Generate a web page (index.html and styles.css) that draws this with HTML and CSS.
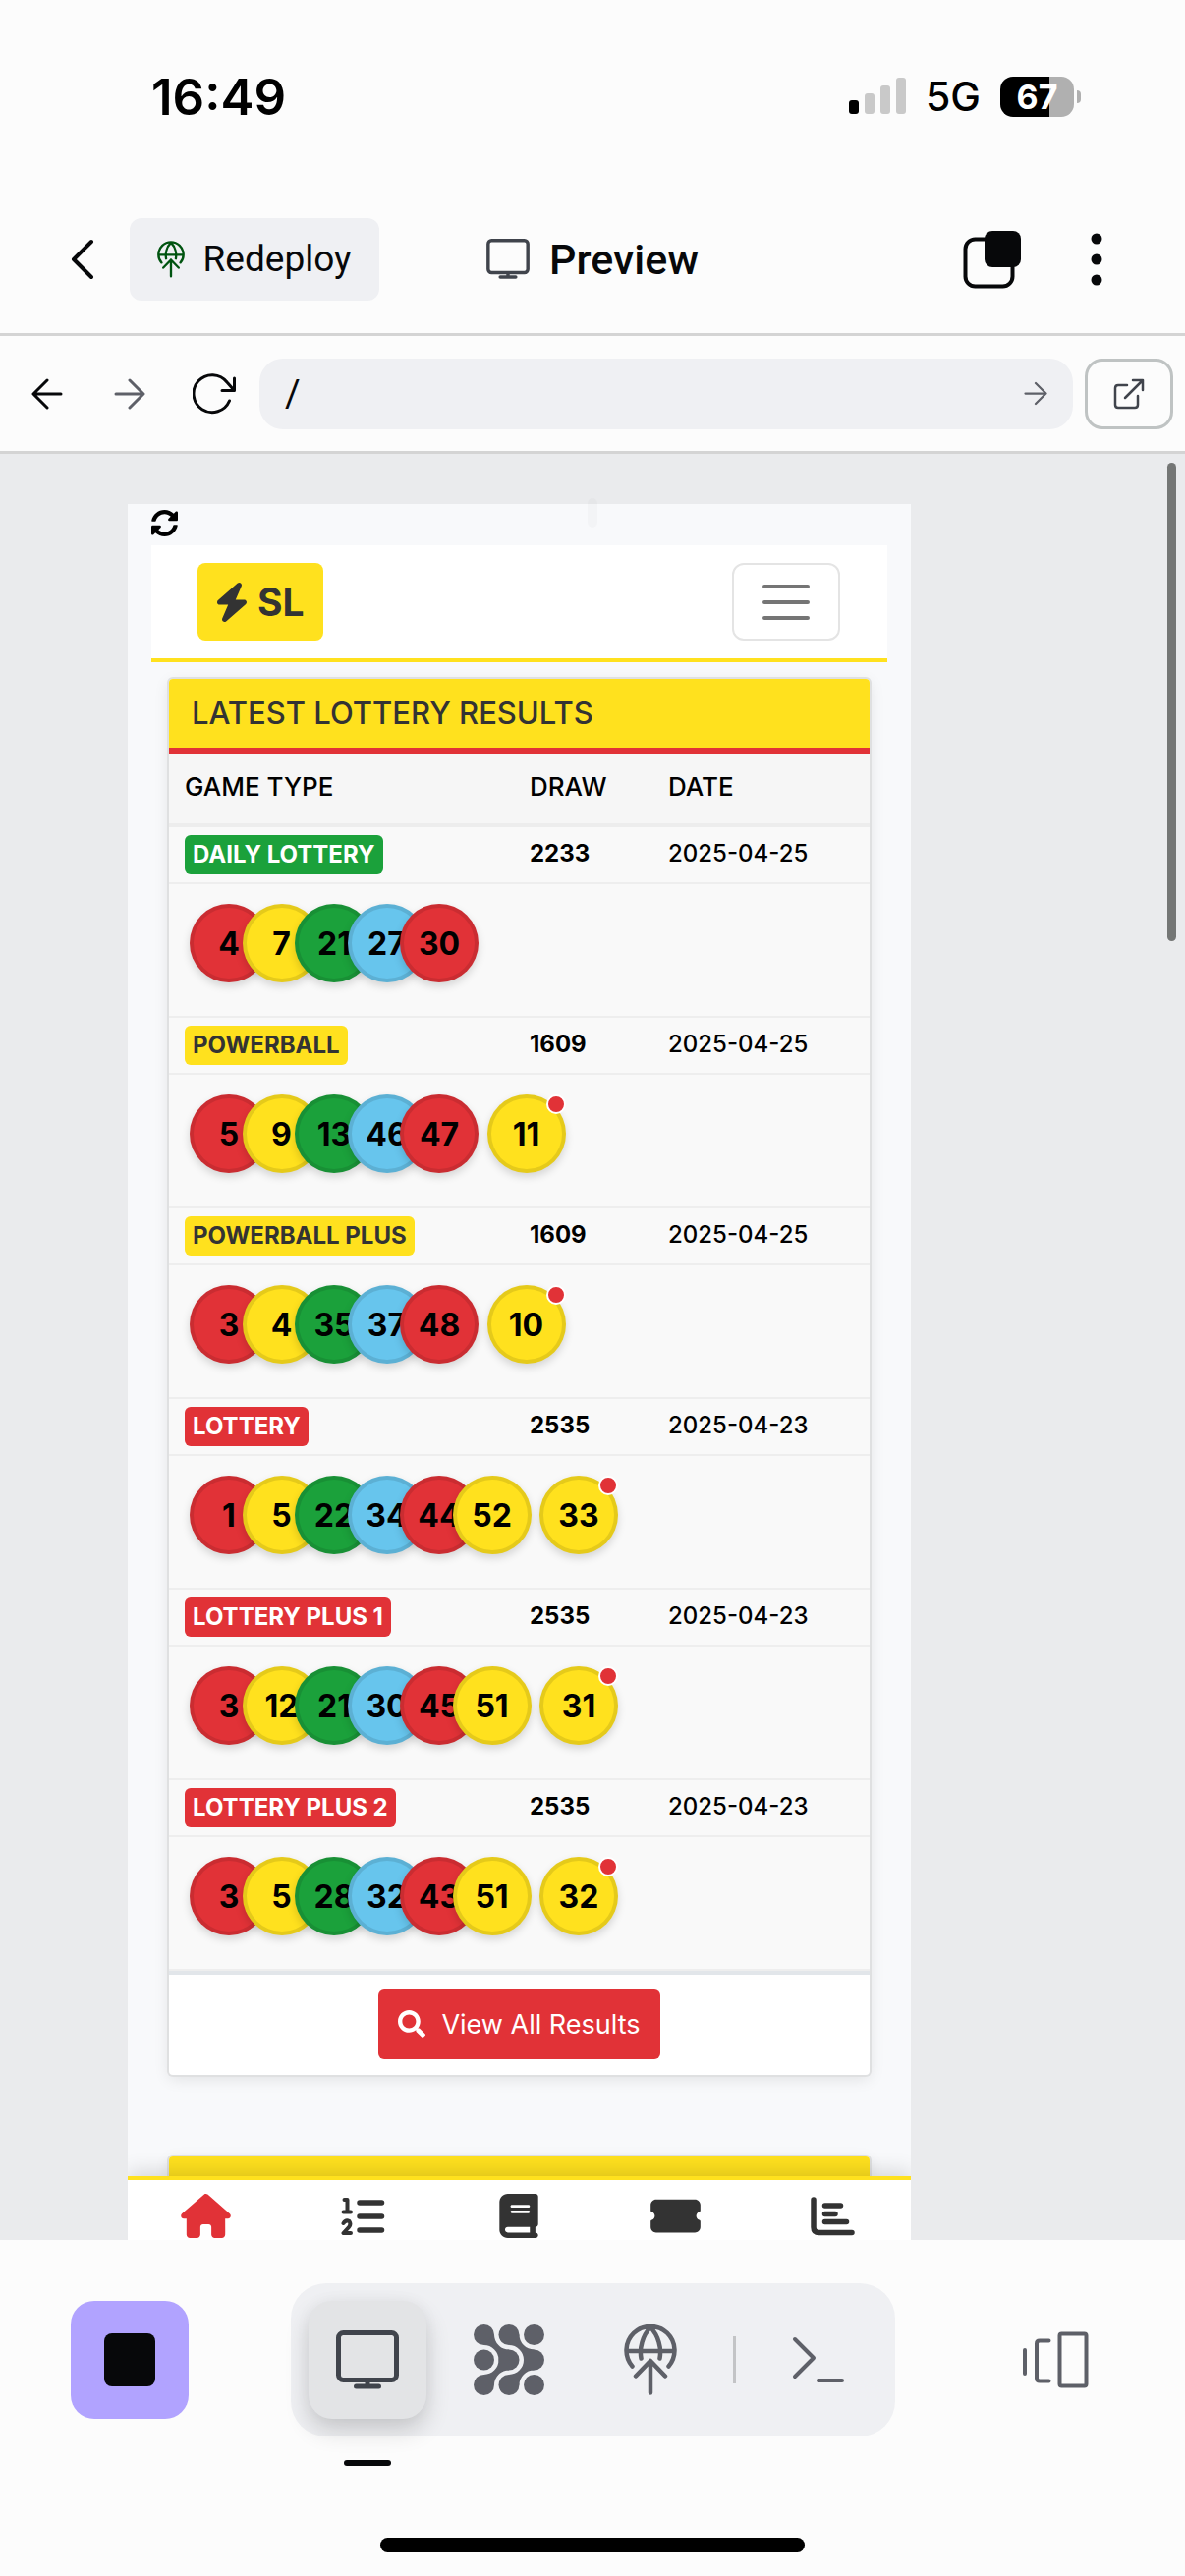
FILE: index.html
```html
<!DOCTYPE html>
<html lang="en">
<head>
<meta charset="utf-8">
<meta name="viewport" content="width=device-width, initial-scale=1">
<title>Preview</title>
<link rel="stylesheet" href="styles.css">
</head>
<body>
<svg class="defs" aria-hidden="true">
  <symbol id="i-monitor" viewBox="0 0 64 60"><g fill="none" stroke="currentColor" stroke-width="5" stroke-linecap="round" stroke-linejoin="round"><rect x="2.500" y="2.500" width="59" height="48" rx="5"/><path d="M32 51v6M20.500 57h23"/></g></symbol>
  <symbol id="i-deploy" viewBox="0 0 54 72"><g fill="none" stroke="currentColor" stroke-width="4.500" stroke-linecap="round" stroke-linejoin="round"><path d="M8.500 42.500A24.500 24.500 0 1 1 45.500 42.500M3 27H51M17.500 34.500C15.500 24 19 11 27 3C35 11 38.500 24 36.500 34.500M27 69.500V37M12 52.500L27 37L42 52.500"/></g></symbol>
  <symbol id="i-arrow" viewBox="0 0 32 32"><path d="M2 16H29M16 2L30 16L16 30" fill="none" stroke="currentColor" stroke-width="3" stroke-linecap="round" stroke-linejoin="round"/></symbol>
</svg>

<header class="chrome">
  <div class="status">
    <time class="clock">16:49</time>
    <div class="status-right">
      <svg class="signal" viewBox="0 0 58 38" aria-label="Signal"><rect y="23" width="10" height="14" rx="3"/><g fill="#c9c9c9"><rect x="16" y="16" width="10" height="21" rx="3"/><rect x="32" y="8" width="10" height="29" rx="3"/><rect x="48" width="10" height="37" rx="3"/></g></svg>
      <span class="network">5G</span>
      <span class="battery">67</span><i class="battery-tip"></i>
    </div>
  </div>
  <div class="titlebar">
    <button class="plain back" aria-label="Back"><svg width="26" height="42" viewBox="0 0 26 42"><path d="M22 3L4 21L22 39" fill="none" stroke="currentColor" stroke-width="4" stroke-linecap="round" stroke-linejoin="round"/></svg></button>
    <button class="redeploy"><svg width="28" height="38"><use href="#i-deploy"/></svg>Redeploy</button>
    <h1 class="title"><svg width="44" height="41"><use href="#i-monitor"/></svg>Preview</h1>
    <div class="title-actions">
      <button class="plain" aria-label="Tabs"><svg width="60" height="60" viewBox="0 0 60 60"><rect x="2.500" y="9.500" width="48" height="48" rx="10" fill="none" stroke="currentColor" stroke-width="4"/><rect x="22" y="1" width="37" height="37" rx="8" fill="currentColor"/></svg></button>
      <button class="plain" aria-label="More"><svg width="12" height="54" viewBox="0 0 12 54"><g fill="currentColor"><circle cx="6" cy="6" r="5.500"/><circle cx="6" cy="27" r="5.500"/><circle cx="6" cy="48" r="5.500"/></g></svg></button>
    </div>
  </div>
  <div class="urlbar">
    <button class="plain nav-back" aria-label="Go back"><svg width="32" height="32"><use href="#i-arrow"/></svg></button>
    <button class="plain dim" aria-label="Go forward"><svg width="32" height="32"><use href="#i-arrow"/></svg></button>
    <button class="plain" aria-label="Reload"><svg width="44" height="42" viewBox="0 0 44 42"><path d="M37.500 28A19 19 0 1 1 35 9L42 17M42.500 5V17.500H30" fill="none" stroke="currentColor" stroke-width="3" stroke-linecap="round" stroke-linejoin="round"/></svg></button>
    <div class="field"><input type="text" value="/" aria-label="Path"><button class="plain dim" aria-label="Open path"><svg width="24" height="25"><use href="#i-arrow"/></svg></button></div>
    <button class="external" aria-label="Open in new tab"><svg width="32" height="32" viewBox="0 0 32 32"><path d="M14 7H5Q2 7 2 10V27Q2 30 5 30H22Q25 30 25 27V18M12 20L30 2M20 2H30V12" fill="none" stroke="currentColor" stroke-width="2.500" stroke-linecap="round" stroke-linejoin="round"/></svg></button>
  </div>
</header>

<main class="stage">
  <div class="scrollbar"></div>
  <div class="handle"></div>
  <div class="site">
    <div class="site-top"><svg width="27" height="27" viewBox="8 8 496 496"><path d="M370.720 133.280C339.458 104.008 298.888 87.962 255.848 88c-77.458.068-144.328 53.178-162.791 126.850-1.344 5.363-6.122 9.150-11.651 9.150H24.103c-7.498 0-13.194-6.807-11.807-14.176C33.933 94.924 134.813 8 256 8c66.448 0 126.791 26.136 171.315 68.685L463.030 40.970C478.149 25.851 504 36.559 504 57.941V192c0 13.255-10.745 24-24 24H345.941c-21.382 0-32.090-25.851-16.971-40.971l41.750-41.749zM32 296h134.059c21.382 0 32.090 25.851 16.971 40.971l-41.750 41.750c31.262 29.273 71.835 45.319 114.876 45.280 77.418-.07 144.315-53.144 162.787-126.849 1.344-5.363 6.122-9.150 11.651-9.150h57.304c7.498 0 13.194 6.807 11.807 14.176C478.067 417.076 377.187 504 256 504c-66.448 0-126.791-26.136-171.315-68.685L48.970 471.030C33.851 486.149 8 475.441 8 454.059V320c0-13.255 10.745-24 24-24z"/></svg></div>
    <nav class="navbar">
      <a class="brand" href="#"><svg width="36" height="40" viewBox="0 0 448 512"><path fill="currentColor" d="M349.400 44.600c5.900-13.700 1.500-29.700-10.600-38.500s-28.600-8-39.900 1.800l-256 224c-10 8.800-13.600 22.900-8.900 35.300S50.700 288 64 288H175.500L98.600 467.400c-5.900 13.700-1.500 29.700 10.600 38.500s28.600 8 39.900-1.800l256-224c10-8.800 13.600-22.900 8.900-35.300s-16.600-20.700-30-20.700H272.500L349.400 44.600z"/></svg>SL</a>
      <button class="toggler" aria-label="Menu"><svg width="48" height="36" viewBox="0 0 48 36"><path d="M2 2H46M2 18H46M2 34H46" stroke="#757575" stroke-width="4" stroke-linecap="round"/></svg></button>
    </nav>
    <section class="card">
      <h2 class="card-head">LATEST LOTTERY RESULTS</h2>
      <table class="results">
        <thead><tr><th class="c-game">GAME TYPE</th><th class="c-draw">DRAW</th><th>DATE</th></tr></thead>
        <tbody>
          <tr class="game"><td><span class="badge green">DAILY LOTTERY</span></td><td class="draw">2233</td><td>2025-04-25</td></tr>
          <tr class="numbers"><td colspan="3"><div class="balls"><b class="red">4</b><b class="yellow">7</b><b class="green">21</b><b class="blue">27</b><b class="red">30</b></div></td></tr>
          <tr class="game"><td><span class="badge yellow">POWERBALL</span></td><td class="draw">1609</td><td>2025-04-25</td></tr>
          <tr class="numbers"><td colspan="3"><div class="balls"><b class="red">5</b><b class="yellow">9</b><b class="green">13</b><b class="blue">46</b><b class="red">47</b><b class="yellow bonus">11</b></div></td></tr>
          <tr class="game"><td><span class="badge yellow">POWERBALL PLUS</span></td><td class="draw">1609</td><td>2025-04-25</td></tr>
          <tr class="numbers"><td colspan="3"><div class="balls"><b class="red">3</b><b class="yellow">4</b><b class="green">35</b><b class="blue">37</b><b class="red">48</b><b class="yellow bonus">10</b></div></td></tr>
          <tr class="game"><td><span class="badge red">LOTTERY</span></td><td class="draw">2535</td><td>2025-04-23</td></tr>
          <tr class="numbers"><td colspan="3"><div class="balls"><b class="red">1</b><b class="yellow">5</b><b class="green">22</b><b class="blue">34</b><b class="red">44</b><b class="yellow">52</b><b class="yellow bonus">33</b></div></td></tr>
          <tr class="game"><td><span class="badge red">LOTTERY PLUS 1</span></td><td class="draw">2535</td><td>2025-04-23</td></tr>
          <tr class="numbers"><td colspan="3"><div class="balls"><b class="red">3</b><b class="yellow">12</b><b class="green">21</b><b class="blue">30</b><b class="red">45</b><b class="yellow">51</b><b class="yellow bonus">31</b></div></td></tr>
          <tr class="game"><td><span class="badge red">LOTTERY PLUS 2</span></td><td class="draw">2535</td><td>2025-04-23</td></tr>
          <tr class="numbers"><td colspan="3"><div class="balls"><b class="red">3</b><b class="yellow">5</b><b class="green">28</b><b class="blue">32</b><b class="red">43</b><b class="yellow">51</b><b class="yellow bonus">32</b></div></td></tr>
        </tbody>
      </table>
      <div class="card-foot"><button class="view-all"><svg width="28" height="28" viewBox="0 0 512 512"><path fill="currentColor" d="M505 442.700L405.300 343c-4.500-4.500-10.600-7-17-7H372c27.600-35.300 44-79.700 44-128C416 93.100 322.900 0 208 0S0 93.100 0 208s93.100 208 208 208c48.300 0 92.700-16.400 128-44v16.300c0 6.400 2.500 12.500 7 17l99.700 99.700c9.400 9.400 24.600 9.400 33.900 0l28.300-28.300c9.400-9.400 9.400-24.600.1-34zM208 336c-70.700 0-128-57.200-128-128 0-70.700 57.200-128 128-128 70.700 0 128 57.200 128 128 0 70.700-57.200 128-128 128z"/></svg>View All Results</button></div>
    </section>
    <section class="card next"><div class="card-head"></div></section>
    <nav class="tabs">
      <a class="current" href="#" aria-label="Home"><svg width="51" height="45" viewBox="0 0 576 512"><path fill="currentColor" d="M575.800 255.500c0 18-15 32.100-32 32.100h-32l.7 160.200c0 2.700-.2 5.400-.5 8.100V472c0 22.100-17.900 40-40 40H392c-22.100 0-40-17.900-40-40V384c0-17.700-14.300-32-32-32H256c-17.700 0-32 14.300-32 32v88c0 22.100-17.900 40-40 40H104c-22.100 0-40-17.900-40-40V287.600H32c-18 0-32-14-32-32.100c0-9 3-17 10-24L266.400 8c7-7 15-8 22-8s15 2 21 7L564.800 231.500c8 7 12 15 11 24z"/></svg></a>
      <a href="#" aria-label="Numbers"><svg width="45" height="40" viewBox="0 0 45 40"><g fill="none" stroke="currentColor" stroke-linecap="round" stroke-linejoin="round"><path stroke-width="5.500" d="M19 6H41.500M19 20H41.500M19 34H41.500"/><path stroke-width="4" d="M3.500 3H6.500V15M2.500 15.500H10M2.500 27Q5 23 8.500 25Q10.500 28 8 31L2.500 37H10"/></g></svg></a>
      <a href="#" aria-label="Guide"><svg width="40" height="45" viewBox="0 0 448 512"><path fill="currentColor" d="M96 0C43 0 0 43 0 96V416c0 53 43 96 96 96H384h32c17.700 0 32-14.300 32-32s-14.300-32-32-32V384c17.700 0 32-14.300 32-32V32c0-17.700-14.300-32-32-32H384 96zm0 384H352v64H96c-17.700 0-32-14.300-32-32s14.300-32 32-32zm32-240c0-8.800 7.200-16 16-16H336c8.800 0 16 7.200 16 16s-7.200 16-16 16H144c-8.800 0-16-7.200-16-16zm16 48H336c8.800 0 16 7.200 16 16s-7.200 16-16 16H144c-8.800 0-16-7.200-16-16s7.200-16 16-16z"/></svg></a>
      <a href="#" aria-label="Tickets"><svg width="51" height="45" viewBox="0 0 576 512"><path fill="currentColor" d="M0 128C0 92.700 28.700 64 64 64H512c35.300 0 64 28.700 64 64v64c0 8.800-7.400 15.700-15.700 18.600C541.500 217.100 528 235 528 256s13.500 38.900 32.300 45.400c8.300 2.900 15.700 9.800 15.700 18.600v64c0 35.300-28.700 64-64 64H64c-35.300 0-64-28.700-64-64V320c0-8.800 7.400-15.700 15.700-18.600C34.500 294.900 48 277 48 256s-13.500-38.900-32.300-45.400C7.400 207.700 0 200.800 0 192V128z"/></svg></a>
      <a href="#" aria-label="Statistics"><svg width="45" height="40" viewBox="0 0 45 40"><path d="M3 3V31Q3 36.500 8.500 36.500H42M14.500 9H30.500M14.500 17.500H25M14.500 25.500H36.500" fill="none" stroke="currentColor" stroke-width="5.500" stroke-linecap="round"/></svg></a>
    </nav>
  </div>
</main>

<footer class="dock">
  <div class="dock-row">
    <button class="stop" aria-label="Stop"><svg width="52" height="54" viewBox="0 0 52 54"><rect width="52" height="54" rx="8" fill="#07080a"/></svg></button>
    <div class="tools">
      <button class="plain tool active" aria-label="Preview"><svg width="64" height="60"><use href="#i-monitor"/></svg></button>
      <button class="plain tool" aria-label="Agent"><svg width="72" height="72" viewBox="0 0 72 72"><g fill="currentColor"><circle cx="10.500" cy="10.500" r="10.500"/><circle cx="36" cy="10.500" r="10.500"/><circle cx="61.500" cy="10.500" r="10.500"/><circle cx="10.500" cy="36" r="10.500"/><circle cx="36" cy="36" r="10.500"/><circle cx="61.500" cy="36" r="10.500"/><circle cx="10.500" cy="61.500" r="10.500"/><circle cx="36" cy="61.500" r="10.500"/><circle cx="61.500" cy="61.500" r="10.500"/><path d="M10.500 21A15 15 0 0 1 10.500 51L21 61.500A15 15 0 0 1 36 46.500V25.500A15 15 0 0 1 21 10.500Z"/><path d="M36 21A15 15 0 0 1 36 51L46.500 61.500A15 15 0 0 1 61.500 46.500V25.500A15 15 0 0 1 46.500 10.500Z"/></g></svg></button>
      <button class="plain tool" aria-label="Deploy"><svg width="54" height="72"><use href="#i-deploy"/></svg></button>
      <i class="sep"></i>
      <button class="plain tool" aria-label="Shell"><svg width="54" height="48" viewBox="0 0 54 48"><path d="M3 3L22 22L3 41M27 45H51" fill="none" stroke="currentColor" stroke-width="4" stroke-linecap="round" stroke-linejoin="round"/></svg></button>
    </div>
    <button class="plain panes" aria-label="Panes"><svg width="68" height="58" viewBox="0 0 68 58"><g fill="none" stroke="currentColor" stroke-width="4" stroke-linecap="round" stroke-linejoin="round"><rect x="38.500" y="2.500" width="27" height="53" rx="2"/><path d="M27.500 9.500H18Q15 9.500 15 12.500V47.500Q15 50.500 18 50.500H27.500M3 19V43"/></g></svg></button>
  </div>
  <div class="marker"></div>
  <div class="home-bar"></div>
</footer>
</body>
</html>
```
FILE: styles.css
```css
* { box-sizing: border-box; }
body { margin: 0; background: #fcfcfc; color: #07080a; font-family: Inter, "Liberation Sans", sans-serif; min-height: 100vh; display: flex; flex-direction: column; }
button, input { font: inherit; color: inherit; }
button { cursor: pointer; margin: 0; }
svg { display: block; flex: none; }
.defs { position: absolute; width: 0; height: 0; }
.plain { border: 0; background: none; padding: 0; }
.dim { color: #5e6068; }

.status { height: 196px; padding: 0 106px 0 154px; display: flex; justify-content: space-between; align-items: center; color: #000; }
.clock { font-size: 51px; font-weight: 600; }
.status-right { display: flex; align-items: center; }
.signal { width: 58px; height: 38px; }
.network { font-size: 41px; font-weight: 500; margin: 0 20px; }
.battery { width: 75px; height: 41px; border-radius: 13px; background: linear-gradient(90deg, #000 50px, #b0b0b0 50px); color: #fff; font-size: 34px; line-height: 41px; font-weight: 700; text-align: center; }
.battery-tip { width: 4px; height: 13px; margin-left: 3px; background: #b0b0b0; border-radius: 0 4px 4px 0; }

.titlebar { height: 146px; padding: 0 84px 8px 71px; display: flex; align-items: center; border-bottom: 3px solid #d4d4d4; font-family: Roboto, sans-serif; }
.back { margin-right: 35px; }
.redeploy { width: 254px; height: 84px; padding: 0; border: 0; border-radius: 12px; background: #eff0f3; display: flex; align-items: center; justify-content: center; gap: 18px; font-size: 37px; }
.redeploy svg { color: #005410; }
.title { margin: 0 0 0 109px; display: flex; align-items: center; gap: 20px; font-size: 43px; font-weight: 500; }
.title svg { color: #40444c; }
.title-actions { margin-left: auto; display: flex; align-items: center; gap: 70px; }

.urlbar { height: 120px; padding: 0 12px 0 32px; display: flex; align-items: center; gap: 12px; border-bottom: 3px solid #d4d4d4; }
.urlbar > .plain { margin-right: 36px; }
.urlbar > .nav-back { transform: rotate(180deg); }
.urlbar > .dim { margin-left: 4px; }
.field { flex: 1; min-width: 0; margin-left: -24px; height: 72px; padding: 0 26px; border-radius: 24px; background: #eff0f3; display: flex; align-items: center; }
.field input { flex: 1; min-width: 0; border: 0; background: none; outline: 0; padding: 0; font-family: Roboto, sans-serif; font-size: 38px; }
.external { width: 90px; height: 72px; padding: 0; border: 3px solid #bfc3c3; border-radius: 18px; background: none; display: flex; align-items: center; justify-content: center; color: #40444c; }

.stage { position: relative; background: #eaebed; padding: 51px 279px 0 130px; overflow: hidden; }
.scrollbar { position: absolute; top: 9px; right: 9px; width: 9px; height: 487px; border-radius: 5px; background: #747675; }
.handle { position: absolute; top: 45px; left: 50%; transform: translateX(-50%); width: 10px; height: 30px; border-radius: 5px; background: rgba(0, 0, 0, .02); z-index: 1; }
.site { background: #f8f9fb; overflow: hidden; }
.site-top { height: 42px; padding: 6px 24px; }
.navbar { margin: 0 24px; height: 119px; padding: 0 48px 0 47px; background: #fff; border-bottom: 4px solid #ffe11e; display: flex; align-items: center; justify-content: space-between; }
.brand { height: 79px; padding: 0 19px 0 17px; border-radius: 8px; background: #ffe11e; color: #333; text-decoration: none; display: flex; align-items: center; gap: 8px; font-size: 39px; line-height: 77px; align-items: center; font-weight: 700; }
.toggler { width: 110px; height: 79px; padding: 0; border: 2px solid #e4e4e4; border-radius: 12px; background: none; display: flex; align-items: center; justify-content: center; }

.card { margin: 17px 42px 0; background: #fff; border-radius: 4px; overflow: hidden; box-shadow: 0 0 0 2px #dfe0e1, 0 4px 16px rgba(0, 0, 0, .1); }
.card-head { margin: 0; height: 76px; padding: 0 23px; background: #ffe11e; color: #333; border-bottom: 6px solid #e13237; font-size: 31px; line-height: 70px; font-weight: 500; }
.results { width: 100%; border-collapse: separate; border-spacing: 0; table-layout: fixed; background: #f9f9f9; color: #000; }
.results th { height: 75px; padding: 0 0 4px 16px; background: #f6f6f6; border-bottom: 4px solid #ededed; text-align: left; font-size: 26px; font-weight: 500; }
.results .c-game { width: 351px; }
.results .c-draw { width: 141px; }
.results td { padding: 0 0 4px 16px; border-bottom: 2px solid #eee; font-size: 24px; font-weight: 500; }
.results tr.game td { height: 58px; }
.results tr.game td:first-child { padding-bottom: 0; }
.results .draw { font-weight: 700; }
.badge { display: inline-block; height: 40px; padding: 0 8px; border-radius: 6px; font-size: 24px; line-height: 40px; font-weight: 700; color: #fff; vertical-align: middle; }
.red { background: #e13237; }
.yellow { background: #ffe11e; }
.green { background: #1ba13b; }
.blue { background: #67c5ed; }
.badge.yellow { color: #333; }
.numbers td { height: 136px; vertical-align: top; }
.balls { width: 428px; margin: 20px 0 0 5px; display: grid; grid-template-columns: repeat(8, minmax(0, 1fr)); }
.balls b { position: relative; width: 80px; height: 80px; border-radius: 50%; font-size: 32px; font-weight: 700; line-height: 82px; text-align: center; box-shadow: inset 0 0 0 4px rgba(0, 0, 0, .1), 0 4px 8px rgba(0, 0, 0, .15); }
.balls .bonus { margin-left: 35px; }
.bonus::after { content: ""; position: absolute; top: 0; right: 0; width: 16px; height: 16px; border: 2px solid #fff; border-radius: 50%; background: #e13237; }
.card-foot { height: 106px; padding-bottom: 2px; border-top: 4px solid #e2e6ea; display: flex; align-items: center; justify-content: center; }
.view-all { height: 71px; padding: 0 20px; border: 0; border-radius: 6px; background: #e13237; color: #fff; display: flex; align-items: center; gap: 16px; font-size: 27px; }
.next { margin-top: 83px; border-radius: 4px 4px 0 0; }
.next .card-head { height: 20px; border: 0; }
.tabs { position: relative; height: 65px; padding: 14px 0 2px; border-top: 4px solid #ffe11e; background: #fff; box-shadow: 0 -4px 20px rgba(0, 0, 0, .15); display: grid; grid-template-columns: repeat(5, 1fr); align-items: center; justify-items: center; }
.tabs a { color: #333; }
.tabs .current { color: #e13237; }

.dock { flex: 1; padding-top: 44px; display: flex; flex-direction: column; }
.dock-row { display: grid; grid-template-columns: 1fr auto 1fr; align-items: center; padding: 0 72px; }
.stop { width: 120px; height: 120px; padding: 0; border: 0; border-radius: 24px; background: #b1a3ff; display: flex; align-items: center; justify-content: center; }
.tools { height: 156px; padding: 18px; border-radius: 36px; background: #eff0f3; display: flex; align-items: center; gap: 24px; }
.tool { width: 120px; height: 120px; border-radius: 24px; display: flex; align-items: center; justify-content: center; color: #5e6068; }
.active { background: #e3e4e6; color: #40444c; box-shadow: 0 12px 24px rgba(0, 0, 0, .16), 0 0 16px rgba(0, 0, 0, .04); }
.sep { width: 3px; height: 48px; background: #c3c4c6; }
.panes { justify-self: end; padding-right: 26px; color: #5e6068; }
.marker { width: 48px; height: 6px; margin: 24px 0 0 350px; border-radius: 3px; background: #07080a; }
.home-bar { width: 432px; height: 15px; margin: 73px auto 24px; border-radius: 8px; background: #000; }
```
